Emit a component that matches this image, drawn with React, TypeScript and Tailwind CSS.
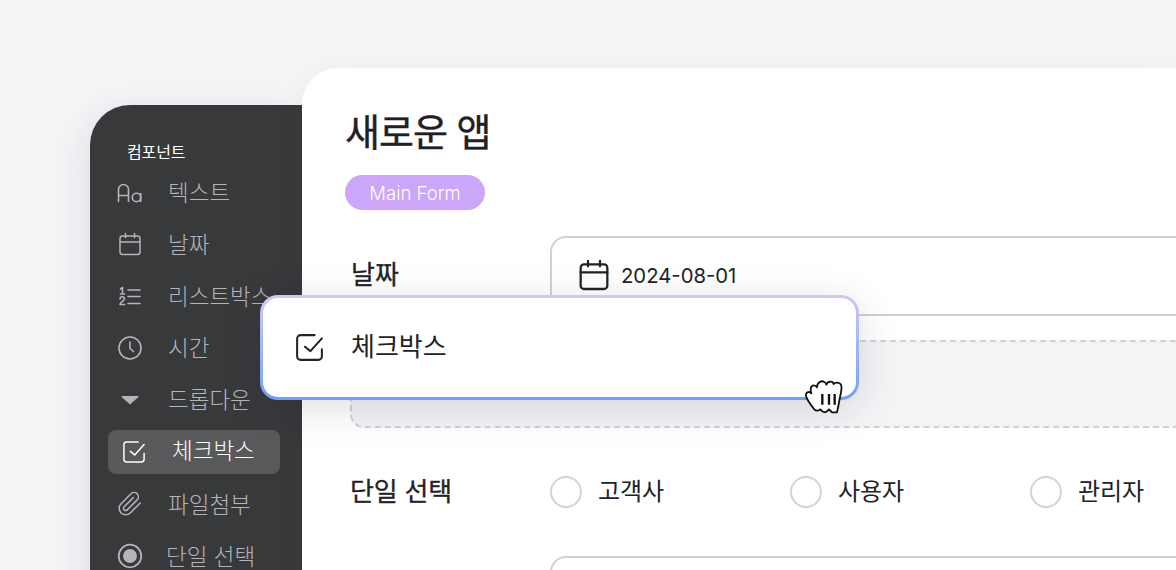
import React from "react";

const font = "font-['Inter','Noto_Sans_CJK_KR',sans-serif]";

function Aa() {
  return (
    <svg className="mt-[2px]" width="26" height="22" viewBox="0 0 26 22" fill="none" stroke="currentColor" strokeWidth="1.6" strokeLinecap="round" strokeLinejoin="round">
      <path d="M1.5 19.5V7.500a5 5 0 0 1 10 0v12M1.5 13.500h10" />
      <circle cx="19.500" cy="15.500" r="4.200" />
      <path d="M23.700 11.500v8" />
    </svg>
  );
}
function Cal({ size = 24, sw = 1.5 }: { size?: number; sw?: number }) {
  return (
    <svg width={size} height={size} viewBox="0 0 24 24" fill="none" stroke="currentColor" strokeWidth={sw} strokeLinecap="round" strokeLinejoin="round">
      <rect x="2" y="4" width="20" height="18.500" rx="2.500" />
      <path d="M2 10h20M7.500 1.500v4M16.500 1.500v4" />
    </svg>
  );
}
function ListNum() {
  return (
    <svg width="24" height="24" viewBox="0 0 24 24" fill="none" stroke="currentColor" strokeLinecap="round" strokeLinejoin="round">
      <path d="M10 6h12M10 12.500h12M10 19.500h12" strokeWidth="1.500" />
      <path d="M2.500 5 4.500 3.500V10M2.500 10h4" strokeWidth="1.600" />
      <path d="M2 15a2.200 2.200 0 0 1 4.400 0c0 2-4.400 3-4.400 5.500h4.600" strokeWidth="1.600" />
    </svg>
  );
}
function Clock() {
  return (
    <svg width="24" height="24" viewBox="0 0 24 24" fill="none" stroke="currentColor" strokeWidth="1.600" strokeLinecap="round" strokeLinejoin="round">
      <circle cx="12" cy="12" r="11" />
      <path d="M12 6v6.500l3.500 3" />
    </svg>
  );
}
function Caret() {
  return (
    <svg width="24" height="24" viewBox="0 0 24 24" fill="currentColor">
      <path d="M4 8h16a.6.6 0 0 1 .4 1L12.600 16a1 1 0 0 1-1.200 0L3.600 9A.6.6 0 0 1 4 8z" />
    </svg>
  );
}
function Check({ size = 22, sw = 1.6 }: { size?: number; sw?: number }) {
  return (
    <svg width={size} height={size} viewBox="0 0 24 24" fill="none" stroke="currentColor" strokeWidth={sw} strokeLinecap="round" strokeLinejoin="round">
      <path d="M23 13.500V20a3 3 0 0 1-3 3H4a3 3 0 0 1-3-3V4a3 3 0 0 1 3-3h12.500" />
      <path d="M8 11.300l4.800 3.900L23 3.900" />
    </svg>
  );
}
function Clip() {
  return (
    <svg width="26" height="26" viewBox="0 0 24 24" fill="none" stroke="currentColor" strokeWidth="1.400" strokeLinecap="round" strokeLinejoin="round">
      <path d="M21.440 11.050l-9.190 9.190a6 6 0 0 1-8.490-8.490l9.190-9.190a4 4 0 0 1 5.660 5.660l-9.200 9.190a2 2 0 0 1-2.830-2.830l8.490-8.480" />
    </svg>
  );
}
function RadioOn() {
  return (
    <svg width="30" height="30" viewBox="0 0 30 30" fill="none">
      <circle cx="15" cy="15" r="13" stroke="currentColor" strokeWidth="2" />
      <circle cx="15" cy="15" r="8" fill="currentColor" />
    </svg>
  );
}
function Hand() {
  return (
    <svg width="38" height="34" viewBox="0 0 114 102" fill="#fff" stroke="#111" strokeWidth="5.500" strokeLinejoin="round" strokeLinecap="round">
      <path d="M28 88C20 78 6 60 3 48C1 38 11 32 19 40C15 26 18 16 26 16C30 16 34 18 36 22C36 8 48 0 58 6C62 8 64 12 64 14C68 2 84 2 86 12C90 6 104 6 108 14C112 22 108 40 104 56C102 68 100 80 96 97L82 97C78 96 76 90 72 88C68 94 62 98 56 96C50 94 48 90 46 88C42 92 34 94 28 88Z" />
      <path d="M52 42V74M72 42V74M89 42V74" strokeWidth="7" fill="none" strokeLinecap="butt" />
    </svg>
  );
}

function NavRow({ icon, label, gap = "gap-[25px]", tp = "pt-[2px]" }: { icon: React.ReactNode; label: string; gap?: string; tp?: string }) {
  return (
    <div className={`flex items-center h-[52px] ${gap} pl-[27px] whitespace-nowrap text-[#b4b5b8]`}>
      <span className="flex w-[26px] justify-center shrink-0">{icon}</span>
      <span className={`${tp} text-[22.500px] leading-none font-light`}>{label}</span>
    </div>
  );
}

function Radio({ label, w }: { label: string; w: string }) {
  return (
    <div className={`flex items-center gap-[16px] ${w}`}>
      <span className="w-[32px] h-[32px] rounded-full border-2 border-[#d2d3d8] bg-white shrink-0" />
      <span className="text-[24px] leading-none text-[#222326] font-normal tracking-[-0.1px]">{label}</span>
    </div>
  );
}

export default function App() {
  return (
    <div className={`relative w-[1176px] h-[570px] overflow-hidden bg-[#f4f5f7] ${font}`}>
      <div className="flex h-full pl-[90px] pt-[68px]">
        <aside className="mt-[37px] w-[212px] shrink-0 h-[600px] rounded-tl-[40px] bg-[#38393b] shadow-[-4px_8px_40px_rgba(30,30,40,0.10)] overflow-hidden">
          <div className="pt-[37px] pl-[37px] text-[16px] leading-5 text-white font-normal h-[62px] tracking-[-0.1px]">컴포넌트</div>
          <div className="-mt-[1px]">
            <NavRow icon={<Aa />} label="텍스트" />
            <NavRow icon={<Cal />} label="날짜" />
            <NavRow icon={<ListNum />} label="리스트박스" />
            <NavRow icon={<Clock />} label="시간" tp="pt-0" />
            <NavRow icon={<Caret />} label="드롭다운" tp="pt-0" />
            <div className="ml-[18px] mr-[22px] h-[44px] my-[4px] rounded-lg bg-[#58595b] flex items-center pl-[15px] gap-[27px] text-white">
              <span className="flex w-[22px] justify-center"><Check /></span>
              <span className="pb-[2px] text-[22.500px] leading-none font-light">체크박스</span>
            </div>
            <NavRow icon={<Clip />} label="파일첨부" />
            <NavRow icon={<RadioOn />} label="단일 선택" gap="gap-[23px]" />
          </div>
        </aside>
        <main className="flex-1 rounded-tl-[36px] bg-white pl-[44px] pt-[38px] min-w-0 h-[560px] shadow-[0_0_30px_rgba(30,30,40,0.04)]">
          <h1 className="-ml-[1px] text-[38px] leading-[52px] font-normal text-[#1f2023] tracking-[-1px] [-webkit-text-stroke:0.4px_#1f2023]">새로운 앱</h1>
          <div className="mt-[17px] -ml-[1px] w-[140px] h-[35px] rounded-full bg-[#cba6f9] flex items-center justify-center pt-[2px] text-[18.500px] font-light text-white">Main Form</div>
          <div className="mt-[26px] flex items-start">
            <div className="w-[204px] pl-[5px] pt-[23px] text-[26px] leading-8 font-normal text-[#222326] [-webkit-text-stroke:0.3px_#222326]">날짜</div>
            <div className="flex-1 h-[80px] rounded-tl-[16px] border-2 border-r-0 border-[#d0d1d6] flex items-start pl-[26px] pt-[21px] gap-[11px] text-[#222326]">
              <Cal size={32} sw={1.7} />
              <span className="text-[20.300px] leading-8 font-normal pt-[1px]">2024-08-01</span>
            </div>
          </div>
          <div className="mt-[24px] ml-[4px] h-[88px] rounded-bl-[14px] border-2 border-r-0 border-dashed border-[#d0d1d6] bg-[#f3f4f6]" />
          <div className="mt-[46px] flex items-center">
            <div className="w-[204px] pl-[4px] text-[26px] leading-9 font-normal text-[#222326] tracking-[-0.2px] [-webkit-text-stroke:0.3px_#222326]">단일 선택</div>
            <Radio label="고객사" w="w-[240px]" />
            <Radio label="사용자" w="w-[240px]" />
            <Radio label="관리자" w="w-[140px]" />
          </div>
          <div className="mt-[46px] ml-[204px] h-[40px] rounded-tl-[16px] border-2 border-r-0 border-b-0 border-[#d0d1d6]" />
        </main>
      </div>

      <div className="absolute left-[260px] top-[295px] w-[599px] h-[105px] rounded-[18px] p-[3px] bg-gradient-to-b from-[#d0c6f9] to-[#6fa0fb] shadow-[0_8px_40px_rgba(30,30,50,0.14)]">
        <div className="w-full h-full rounded-[15px] bg-white flex items-center pl-[33px] gap-[28px] text-[#222326]">
          <Check size={27} sw={1.800} />
          <span className="pb-[2px] text-[26px] leading-none">체크박스</span>
        </div>
      </div>
      <div className="absolute left-[805px] top-[380px]"><Hand /></div>
    </div>
  );
}
